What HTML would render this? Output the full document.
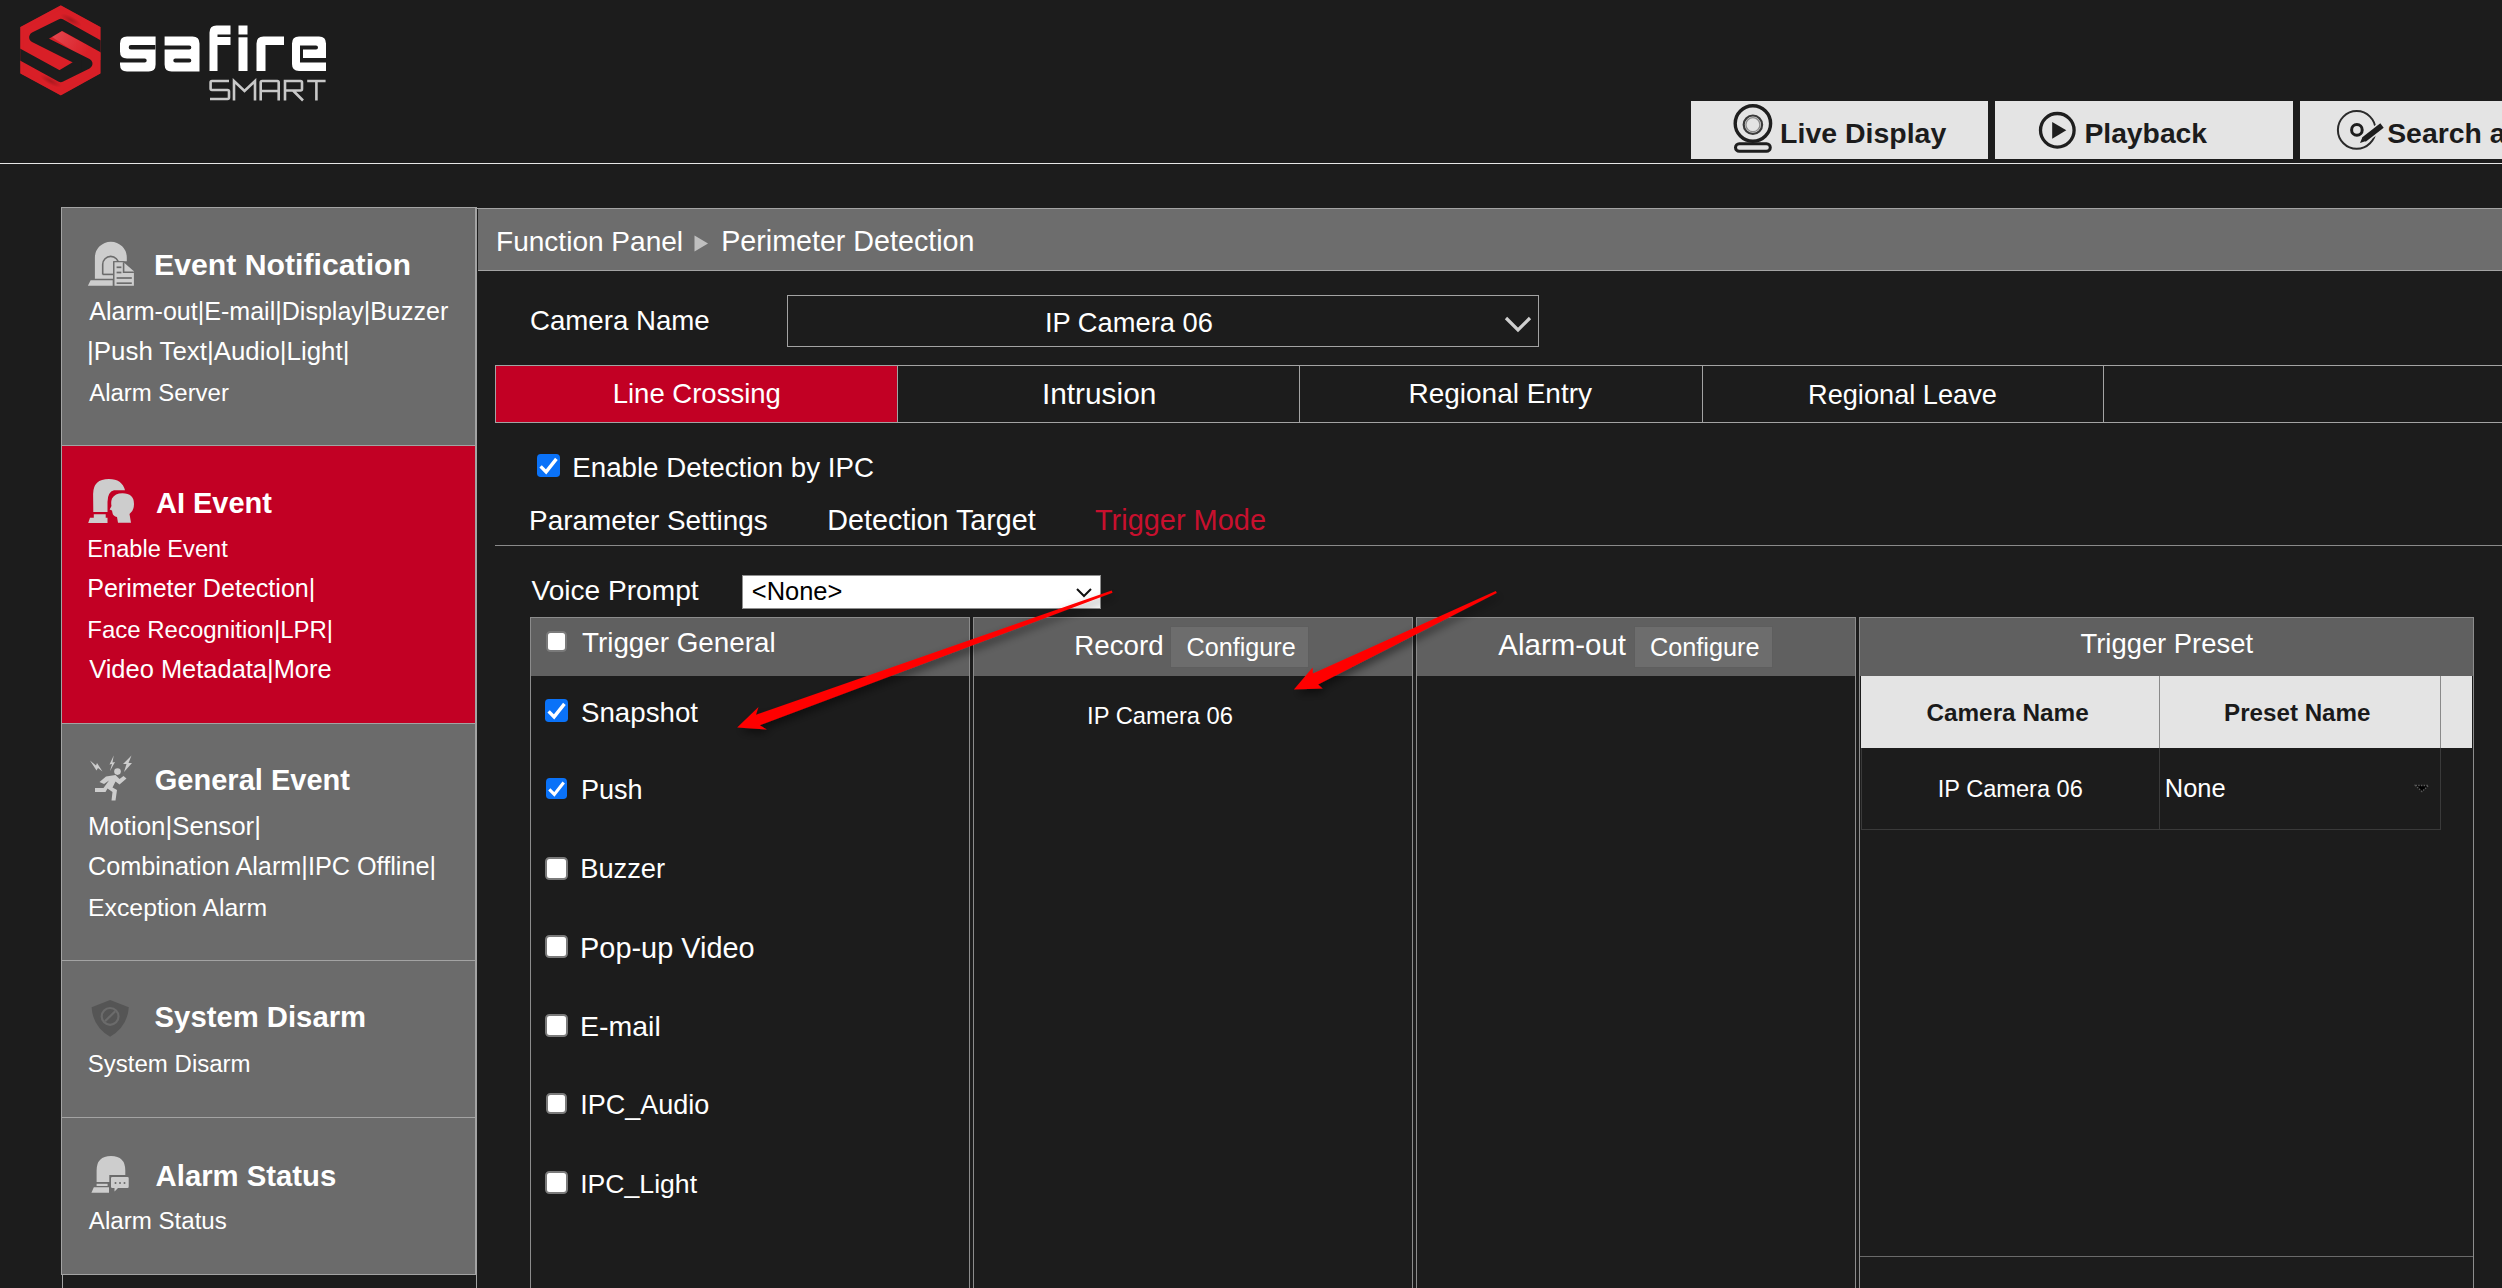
<!DOCTYPE html>
<html><head><meta charset="utf-8">
<style>
*{margin:0;padding:0;box-sizing:border-box}
html,body{width:2502px;height:1288px;overflow:hidden;background:#1c1c1c;font-family:"Liberation Sans",sans-serif;color:#fff}
.a{position:absolute}
.t{position:absolute;white-space:nowrap;line-height:1}
.b{font-weight:bold}
.box{position:absolute;border:1px solid #a3a3a3}
</style></head><body>

<!-- LOGO -->
<svg class="a" style="left:0;top:0" width="340" height="110" viewBox="0 0 340 110">
  <defs>
   <clipPath id="hexc"><polygon points="60.8,5.2 100.6,27 100.6,73.5 60.8,95.6 20.2,73.5 20.2,27"/></clipPath>
   <radialGradient id="fold"><stop offset="0" stop-color="#000" stop-opacity="0.22"/><stop offset="1" stop-color="#000" stop-opacity="0"/></radialGradient>
   <linearGradient id="hl" x1="50" y1="36" x2="85" y2="56" gradientUnits="userSpaceOnUse"><stop offset="0" stop-color="#e5474f"/><stop offset="1" stop-color="#d92028"/></linearGradient>
  </defs>
  <g clip-path="url(#hexc)">
   <polygon points="60.8,7 99.1,28 99.1,72.5 60.8,93.8 21.7,72.5 21.7,28" fill="#d91f27" stroke="#d91f27" stroke-width="4" stroke-linejoin="round"/>
   <polygon points="50.5,36 60.5,30.5 100.6,52.5 100.6,60 87,60" fill="url(#hl)"/>
   <polyline points="108,50.3 60.8,24.1 34.4,37.3 87.2,63.7 60.8,76.9 13,50.7" fill="none" stroke="#1c1c1c" stroke-width="10.5" stroke-linejoin="round"/>
   <polygon points="46,40.5 64,29.8 40,29.8 40,40.5" fill="#1c1c1c"/>
   <polygon points="75.6,60.5 57.6,71.2 81.6,71.2 81.6,60.5" fill="#1c1c1c"/>
   <ellipse cx="71" cy="20" rx="12" ry="3.8" transform="rotate(28 71 20)" fill="url(#fold)"/>
   <ellipse cx="50.6" cy="81" rx="12" ry="3.8" transform="rotate(28 50.6 81)" fill="url(#fold)"/>
  </g>
  <g fill="#fff">
    <!-- s -->
    <path fill-rule="evenodd" d="M127,36.5 H155.6 V64.4 Q155.6,71.4 148.6,71.4 H127 Q120,71.4 120,64.4 V62.4 H144.7 Q146.7,62.4 146.7,60.4 Q146.7,58.4 144.7,58.4 H127 Q120,58.4 120,51.4 V43.5 Q120,36.5 127,36.5 Z M130.9,45.1 Q128.7,45.1 128.7,47.35 Q128.7,49.6 130.9,49.6 H156 V45.1 Z"/>
    <!-- a -->
    <path fill-rule="evenodd" d="M164.6,36.5 H192.5 Q199.5,36.5 199.5,43.5 V71.4 H171.6 Q164.6,71.4 164.6,64.4 V49.4 H189.3 Q191.3,49.4 191.3,47.45 Q191.3,45.5 189.3,45.5 H164.6 Z M175.3,58.4 Q173.3,58.4 173.3,60.4 Q173.3,62.4 175.3,62.4 H189.3 Q191.3,62.4 191.3,60.4 Q191.3,58.4 189.3,58.4 Z"/>
    <!-- f -->
    <path d="M216.5,25.5 H230.5 V34.5 H217.5 V37 H230.5 V45 H217.5 V71 H209.5 V32.5 Q209.5,25.5 216.5,25.5 Z"/>
    <!-- i -->
    <rect x="238.5" y="25.5" width="9" height="9"/>
    <rect x="238.5" y="37.3" width="9" height="33.7"/>
    <!-- r -->
    <path d="M263.5,36.5 H284 V45 H265.5 V71 H256.5 V43.5 Q256.5,36.5 263.5,36.5 Z"/>
    <!-- e -->
    <path fill-rule="evenodd" d="M299,36.5 H319 Q326,36.5 326,43.5 V58 H303 V62.5 H326 V71 H299 Q292,71 292,64 V43.5 Q292,36.5 299,36.5 Z M300,45.5 V62.5 H303 V49.5 H316 Q318,49.5 318,47.5 Q318,45.5 316,45.5 Z"/>
  </g>
  <g fill="none" stroke="#c8c8c8" stroke-width="2.6">
    <!-- S -->
    <path d="M229,81 H212 Q210.6,81 210.6,82.5 V88.5 Q210.6,90 212,90 H227.5 Q229,90 229,91.5 V97.5 Q229,99 227.5,99 H210"/>
    <!-- M -->
    <path d="M234,100.5 V81 L244.5,91 L255,81 V100.5"/>
    <!-- A -->
    <path d="M260.7,100.5 V82.5 Q260.7,81 262.2,81 H277.3 Q278.7,81 278.7,82.5 V100.5 M260.7,91 H278.7"/>
    <!-- R -->
    <path d="M285,100.5 V81 H300.5 Q302,81 302,82.5 V89 Q302,90.5 300.5,90.5 H285 M293,90.5 L303,100.5"/>
    <!-- T -->
    <path d="M307.2,81 H325.6 M316.4,81 V100.5"/>
  </g>
</svg>

<!-- header line -->
<div class="a" style="left:0;top:163px;width:2502px;height:1px;background:#e6e6e6"></div>

<!-- NAV BUTTONS -->
<div class="a" style="left:1691px;top:101px;width:297px;height:58px;background:#e4e4e4"></div>
<div class="a" style="left:1995px;top:101px;width:298px;height:58px;background:#e4e4e4"></div>
<div class="a" style="left:2300px;top:101px;width:202px;height:58px;background:#e4e4e4"></div>

<svg class="a" style="left:1725px;top:100px" width="56" height="60" viewBox="1725 100 56 60">
 <circle cx="1752.9" cy="123.5" r="17.7" fill="none" stroke="#1e1e1e" stroke-width="3.4"/>
 <circle cx="1752.9" cy="124.7" r="9.2" fill="none" stroke="#3a3a3a" stroke-width="2.2"/>
 <circle cx="1752.9" cy="124.7" r="7" fill="none" stroke="#8c8c8c" stroke-width="1.3"/>
 <rect x="1735.5" y="143.7" width="34.8" height="7.6" rx="3.8" fill="none" stroke="#1e1e1e" stroke-width="3"/>
</svg>
<div class="t b" style="left:1780.1px;top:118.5px;font-size:28.47px;color:#1c1c1c">Live Display</div>
<svg class="a" style="left:2030px;top:100px" width="56" height="60" viewBox="2030 100 56 60">
 <circle cx="2057.3" cy="130.3" r="16.8" fill="none" stroke="#1e1e1e" stroke-width="3.3"/>
 <polygon points="2052.2,121.9 2052.2,138.7 2066.3,130.3" fill="#1e1e1e"/>
</svg>
<div class="t b" style="left:2084.4px;top:118.6px;font-size:28.30px;color:#1c1c1c">Playback</div>
<svg class="a" style="left:2330px;top:100px" width="60" height="60" viewBox="2330 100 60 60">
 <circle cx="2356.7" cy="129.9" r="18.8" fill="none" stroke="#2a2a2a" stroke-width="2"/>
 <circle cx="2356.9" cy="129.9" r="5.3" fill="none" stroke="#1e1e1e" stroke-width="3"/>
 <line x1="2363" y1="140" x2="2381.5" y2="126" stroke="#e4e4e4" stroke-width="9"/>
 <line x1="2364" y1="139.5" x2="2382" y2="125.5" stroke="#1e1e1e" stroke-width="5.5"/>
 <polygon points="2360,143 2362.5,137 2366,141" fill="#1e1e1e"/>
</svg>
<div class="t b" style="left:2387.2px;top:118.8px;font-size:28.4px;color:#1c1c1c">Search and</div>
<!-- SIDEBAR -->
<div class="a" style="left:61px;top:207px;width:416px;height:1068px;background:#6b6b6b;border:1px solid #a3a3a3;border-right-width:2px"></div>
<div class="a" style="left:62px;top:445px;width:413px;height:278px;background:#c20024"></div>

<div class="a" style="left:62px;top:445px;width:413px;height:1px;background:#a3a3a3"></div>
<div class="a" style="left:62px;top:723px;width:413px;height:1px;background:#a3a3a3"></div>
<div class="a" style="left:62px;top:960px;width:413px;height:1px;background:#a3a3a3"></div>
<div class="a" style="left:62px;top:1117px;width:413px;height:1px;background:#a3a3a3"></div>
<div class="t b" style="left:154.0px;top:249.9px;font-size:30.24px">Event Notification</div>
<div class="t" style="left:89.2px;top:298.8px;font-size:25.06px">Alarm-out|E-mail|Display|Buzzer</div>
<div class="t" style="left:87.1px;top:339.1px;font-size:25.88px">|Push Text|Audio|Light|</div>
<div class="t" style="left:89.2px;top:380.7px;font-size:23.94px">Alarm Server</div>
<div class="t b" style="left:156.0px;top:488.7px;font-size:28.99px">AI Event</div>
<div class="t" style="left:87.3px;top:538.2px;font-size:23.61px">Enable Event</div>
<div class="t" style="left:87.2px;top:576.4px;font-size:25.09px">Perimeter Detection|</div>
<div class="t" style="left:87.3px;top:618.3px;font-size:23.99px">Face Recognition|LPR|</div>
<div class="t" style="left:89.2px;top:657.1px;font-size:25.46px">Video Metadata|More</div>
<div class="t b" style="left:154.8px;top:766.1px;font-size:29.02px">General Event</div>
<div class="t" style="left:87.9px;top:814.4px;font-size:25.86px">Motion|Sensor|</div>
<div class="t" style="left:88.0px;top:854.0px;font-size:25.25px">Combination Alarm|IPC Offline|</div>
<div class="t" style="left:88.0px;top:895.7px;font-size:24.80px">Exception Alarm</div>
<div class="t b" style="left:154.6px;top:1003.4px;font-size:29.27px">System Disarm</div>
<div class="t" style="left:87.8px;top:1052.3px;font-size:24.02px">System Disarm</div>
<div class="t b" style="left:155.6px;top:1160.7px;font-size:29.31px">Alarm Status</div>
<div class="t" style="left:88.8px;top:1209.0px;font-size:24.12px">Alarm Status</div>


<svg class="a" style="left:84px;top:236px" width="56" height="56" viewBox="0 0 56 56">
 <path d="M10.9,42.8 V21.6 A15.95,15.95 0 0 1 42.8,21.6 V25.2 H29.1 V42.8 Z" fill="#cdcdcd"/>
 <path d="M18.7,38.6 V28.4 A8,8 0 0 1 34.7,28.4" fill="none" stroke="#6b6b6b" stroke-width="1.6"/>
 <line x1="18.7" y1="38.4" x2="29.5" y2="38.4" stroke="#6b6b6b" stroke-width="1.6"/>
 <polygon points="3.9,49.8 6.6,44.3 28.7,44.3 28.7,49.8" fill="#cdcdcd"/>
 <polygon points="29.3,25.3 40,25.3 50.8,34.5 50.8,50.6 29.3,50.6" fill="#6b6b6b"/>
 <polygon points="30.5,26.3 39.6,26.3 49.9,35.2 49.9,49.8 30.5,49.8" fill="#cdcdcd"/>
 <polyline points="39.6,26.3 39.6,36.3 49.9,36.3" fill="none" stroke="#6b6b6b" stroke-width="1.6"/>
 <g stroke="#6b6b6b" stroke-width="1.7"><line x1="32.6" y1="31.3" x2="37.4" y2="31.3"/><line x1="32.6" y1="36.5" x2="37.4" y2="36.5"/><line x1="32.6" y1="42" x2="47.8" y2="42"/><line x1="32.6" y1="47.2" x2="47.8" y2="47.2"/></g>
</svg>
<svg class="a" style="left:84px;top:472px" width="56" height="56" viewBox="0 0 56 56">
 <path d="M9.3,40 L9.1,22 Q9.1,7 25,7 Q38,7 41,18.3 L30,18.3 Q23.5,20 23.5,30 L23.5,40 Z" fill="#cdcdcd"/>
 <polygon points="4.2,50.9 6,45.7 9.8,45.7 9.8,42.2 21.7,42.2 21.7,45.7 23.5,45.7 23.5,50.9" fill="#cdcdcd"/>
 <path d="M34,50.7 L33,45 Q29,44 28.5,41 L28,38.5 L25.7,37.5 L27.5,34 Q26.7,30 28,26.5 Q31,21.3 38.5,21.3 Q50,21.5 50,32 Q50,39 45.5,42 L47,50.7 Z" fill="#cdcdcd"/>
</svg>
<svg class="a" style="left:84px;top:750px" width="56" height="56" viewBox="0 0 56 56">
 <g fill="#cdcdcd">
 <circle cx="33.5" cy="21.6" r="3.3"/>
 <path d="M22,26.5 L31.5,25 L35.5,29 L39.5,26 L42.5,28.5 L35.5,34.5 L31.5,31.5 L28.5,37.5 L33,40 L31.5,50.5 L27.5,50.5 L28.5,42 L23.5,38.5 L21.5,42 L11,42 L11,38 L19.5,38 L25,30.5 L20,34 L15.5,32 Z"/>
 <path d="M6,10.5 L12,15.5 L13,13 L18.5,21.5 L14,18 L12.5,20.5 Z"/>
 <path d="M29.7,5.5 L25.5,14.5 L28,14 L26,21 L31,12 L28.5,12.5 Z"/>
 <path d="M47.5,5.5 L39,14 L42.5,14 L40,22 L48,13 L44.5,13 Z"/>
 </g>
</svg>
<svg class="a" style="left:84px;top:990px" width="56" height="56" viewBox="0 0 56 56">
 <path d="M26.1,10 L44.8,17.3 Q43.5,36.5 26.1,46.8 Q8.7,36.5 7.6,17.3 Z" fill="#555"/>
 <circle cx="26.1" cy="26.4" r="8.4" fill="none" stroke="#6b6b6b" stroke-width="2.2"/>
 <line x1="21" y1="31.3" x2="31.2" y2="21.3" stroke="#6b6b6b" stroke-width="2.2"/>
</svg>
<svg class="a" style="left:84px;top:1146px" width="56" height="56" viewBox="0 0 56 56">
 <path d="M12.6,36.1 V24.5 Q12.6,10 27,10 Q41.3,10 41.3,24.5 V29.1 H25.3 V36.1 Z" fill="#cdcdcd"/>
 <rect x="12.6" y="37.8" width="11" height="2.2" fill="#cdcdcd"/>
 <polygon points="7.4,46.7 9.8,41.3 25,41.3 25,46.7" fill="#cdcdcd"/>
 <path d="M28.3,30.9 H43.5 Q44.7,30.9 44.7,32 V40.8 Q44.7,42 43.5,42 H34 L30.5,45.5 L30.5,42 H28.3 Q27,42 27,40.8 V32 Q27,30.9 28.3,30.9 Z" fill="#cdcdcd"/>
 <g fill="#6b6b6b"><circle cx="31.5" cy="37" r="1"/><circle cx="36" cy="37" r="1"/><circle cx="40.5" cy="37" r="1"/></g>
</svg>

<div class="a" style="left:62px;top:1275px;width:415px;height:30px;border-left:1px solid #a3a3a3;border-right:1px solid #a3a3a3"></div>
<!-- MAIN PANEL -->
<div class="a" style="left:476px;top:208px;width:2026px;height:1px;background:#a3a3a3"></div>
<div class="a" style="left:478px;top:209px;width:2024px;height:61px;background:#6d6d6d"></div>
<div class="a" style="left:478px;top:270px;width:2024px;height:1px;background:#a3a3a3"></div>
<div class="t" style="left:496.0px;top:227.6px;font-size:28.05px">Function Panel</div>
<svg class="a" style="left:690px;top:230px" width="24" height="26"><polygon points="4.5,5.5 18,13.5 4.5,21.5" fill="#bfbfbf"/></svg>
<div class="t" style="left:721.2px;top:227.0px;font-size:28.67px">Perimeter Detection</div>
<div class="t" style="left:530.0px;top:307.1px;font-size:27.65px">Camera Name</div>
<div class="a" style="left:787px;top:295px;width:752px;height:52px;border:1px solid #a3a3a3"></div>
<div class="t" style="left:1045.0px;top:309.0px;font-size:27.29px">IP Camera 06</div>
<svg class="a" style="left:1500px;top:312px" width="36" height="24"><polyline points="6,6 18,18 30,6" fill="none" stroke="#cfcfcf" stroke-width="3.2"/></svg>
<div class="a" style="left:495px;top:365px;width:2007px;height:58px;border-top:1px solid #a3a3a3;border-bottom:1px solid #a3a3a3;border-left:1px solid #a3a3a3"></div>
<div class="a" style="left:496px;top:366px;width:401px;height:56px;background:#c20024"></div>
<div class="a" style="left:897px;top:366px;width:1px;height:56px;background:#a3a3a3"></div>
<div class="a" style="left:1299px;top:366px;width:1px;height:56px;background:#a3a3a3"></div>
<div class="a" style="left:1702px;top:366px;width:1px;height:56px;background:#a3a3a3"></div>
<div class="a" style="left:2103px;top:366px;width:1px;height:56px;background:#a3a3a3"></div>
<div class="t" style="left:612.7px;top:380.4px;font-size:27.50px">Line Crossing</div>
<div class="t" style="left:1041.9px;top:378.7px;font-size:29.85px">Intrusion</div>
<div class="t" style="left:1408.5px;top:380.3px;font-size:27.97px">Regional Entry</div>
<div class="t" style="left:1808.0px;top:381.0px;font-size:27.19px">Regional Leave</div>
<svg class="a" style="left:537px;top:454px" width="23" height="23"><rect x="0" y="0" width="23" height="23" rx="3.8" fill="#0a72f8"/><polyline points="3.60,12.40 9.10,17.90 19.40,4.90" fill="none" stroke="#fff" stroke-width="3.40"/></svg>
<div class="t" style="left:572.3px;top:454.0px;font-size:27.70px">Enable Detection by IPC</div>
<div class="t" style="left:529.1px;top:506.6px;font-size:27.88px">Parameter Settings</div>
<div class="t" style="left:827.3px;top:505.9px;font-size:28.70px">Detection Target</div>
<div class="t" style="left:1095.0px;top:505.7px;font-size:28.94px;color:#c8102e">Trigger Mode</div>
<div class="a" style="left:495px;top:545px;width:2007px;height:1px;background:#8a8a8a"></div>
<div class="t" style="left:531.5px;top:577.2px;font-size:28.10px">Voice Prompt</div>
<div class="a" style="left:742px;top:575px;width:359px;height:34px;background:#fff;border:1px solid #8f8f8f"></div>
<div class="t" style="left:751.8px;top:579.4px;font-size:25.46px;color:#000">&lt;None&gt;</div>
<svg class="a" style="left:1072px;top:584px" width="24" height="18"><polyline points="5,5 12,12 19,5" fill="none" stroke="#111" stroke-width="2"/></svg>
<div class="a" style="left:530px;top:617px;width:440px;height:700px;border:1px solid #8c8c8c;border-bottom:none"></div>
<div class="a" style="left:531px;top:618px;width:438px;height:58px;background:#606060"></div>
<div class="a" style="left:973px;top:617px;width:440px;height:700px;border:1px solid #8c8c8c;border-bottom:none"></div>
<div class="a" style="left:974px;top:618px;width:438px;height:58px;background:#606060"></div>
<div class="a" style="left:1416px;top:617px;width:440px;height:700px;border:1px solid #8c8c8c;border-bottom:none"></div>
<div class="a" style="left:1417px;top:618px;width:438px;height:58px;background:#606060"></div>
<div class="a" style="left:1859px;top:617px;width:615px;height:700px;border:1px solid #8c8c8c;border-bottom:none"></div>
<div class="a" style="left:1860px;top:618px;width:613px;height:58px;background:#606060"></div>
<svg class="a" style="left:546px;top:631px" width="21" height="21"><rect x="1" y="1" width="19" height="19" rx="3.5" fill="#fff" stroke="#7a7a7a" stroke-width="2"/></svg>
<div class="t" style="left:582.0px;top:629.3px;font-size:27.81px">Trigger General</div>
<svg class="a" style="left:545px;top:699px" width="23" height="23"><rect x="0" y="0" width="23" height="23" rx="3.8" fill="#0a72f8"/><polyline points="3.60,12.40 9.10,17.90 19.40,4.90" fill="none" stroke="#fff" stroke-width="3.40"/></svg>
<div class="t" style="left:581.0px;top:698.6px;font-size:27.70px">Snapshot</div>
<svg class="a" style="left:546px;top:778px" width="21" height="21"><rect x="0" y="0" width="21" height="21" rx="3.8" fill="#0a72f8"/><polyline points="3.29,11.32 8.31,16.34 17.71,4.47" fill="none" stroke="#fff" stroke-width="3.10"/></svg>
<div class="t" style="left:581.0px;top:777.3px;font-size:27.04px">Push</div>
<svg class="a" style="left:545px;top:857px" width="23" height="23"><rect x="1" y="1" width="21" height="21" rx="3.5" fill="#fff" stroke="#7a7a7a" stroke-width="2"/></svg>
<div class="t" style="left:580.2px;top:855.3px;font-size:27.30px">Buzzer</div>
<svg class="a" style="left:545px;top:935px" width="23" height="23"><rect x="1" y="1" width="21" height="21" rx="3.5" fill="#fff" stroke="#7a7a7a" stroke-width="2"/></svg>
<div class="t" style="left:580.1px;top:933.5px;font-size:28.89px">Pop-up Video</div>
<svg class="a" style="left:545px;top:1014px" width="23" height="23"><rect x="1" y="1" width="21" height="21" rx="3.5" fill="#fff" stroke="#7a7a7a" stroke-width="2"/></svg>
<div class="t" style="left:580.1px;top:1012.1px;font-size:28.47px">E-mail</div>
<svg class="a" style="left:546px;top:1093px" width="21" height="21"><rect x="1" y="1" width="19" height="19" rx="3.5" fill="#fff" stroke="#7a7a7a" stroke-width="2"/></svg>
<div class="t" style="left:580.2px;top:1091.5px;font-size:27.03px">IPC_Audio</div>
<svg class="a" style="left:545px;top:1171px" width="23" height="23"><rect x="1" y="1" width="21" height="21" rx="3.5" fill="#fff" stroke="#7a7a7a" stroke-width="2"/></svg>
<div class="t" style="left:580.2px;top:1171.0px;font-size:26.62px">IPC_Light</div>
<div class="t" style="left:1074.3px;top:631.7px;font-size:27.70px">Record</div>
<div class="a" style="left:1170px;top:626px;width:139px;height:42px;background:#6d6d6d;border:1px solid #5e5e5e"></div>
<div class="t" style="left:1186.6px;top:635.1px;font-size:25.17px">Configure</div>
<div class="t" style="left:1087.1px;top:704.9px;font-size:23.73px">IP Camera 06</div>
<div class="t" style="left:1498.3px;top:630.2px;font-size:29.48px">Alarm-out</div>
<div class="a" style="left:1634px;top:626px;width:139px;height:42px;background:#6d6d6d;border:1px solid #5e5e5e"></div>
<div class="t" style="left:1649.9px;top:635.0px;font-size:25.31px">Configure</div>
<div class="t" style="left:2080.5px;top:630.2px;font-size:27.40px">Trigger Preset</div>
<div class="a" style="left:1860px;top:676px;width:613px;height:581px;border-bottom:1px solid #6a6a6a"></div>
<div class="a" style="left:1861px;top:676px;width:611px;height:72px;background:#e4e4e4"></div>
<div class="a" style="left:2159px;top:676px;width:1px;height:72px;background:#8a8a8a"></div>
<div class="a" style="left:2440px;top:676px;width:1px;height:72px;background:#8a8a8a"></div>
<div class="t b" style="left:1926.4px;top:700.5px;font-size:24.34px;color:#1a1a1a">Camera Name</div>
<div class="t b" style="left:2224.1px;top:700.6px;font-size:24.17px;color:#1a1a1a">Preset Name</div>
<div class="a" style="left:1861px;top:748px;width:580px;height:82px;border:1px solid #3a3a3a;border-top:none"></div>
<div class="a" style="left:2159px;top:748px;width:1px;height:82px;background:#3a3a3a"></div>
<div class="t" style="left:1937.8px;top:777.5px;font-size:23.57px">IP Camera 06</div>
<div class="t" style="left:2164.8px;top:775.8px;font-size:25.47px">None</div>
<svg class="a" style="left:2410px;top:780px" width="24" height="16"><polygon points="5.5,5.5 18.5,5.5 12,11.5" fill="#000" stroke="#5a5a5a" stroke-width="1.3" stroke-dasharray="1.5,1.2"/></svg>

<svg class="a" style="left:0;top:0" width="2502" height="1288">
 <defs><filter id="sh" x="-20%" y="-20%" width="140%" height="140%"><feDropShadow dx="3" dy="4" stdDeviation="4" flood-color="#000" flood-opacity="0.5"/></filter></defs>
 <polygon filter="url(#sh)" fill="#ff0000" points="737.2,727.5 758.5,707.0 756.0,714.8 1111.7,590.5 1112.5,592.7 759.8,725.2 766.7,729.6"/>
 <polygon filter="url(#sh)" fill="#ff0000" points="1293.9,689.4 1312.6,667.6 1312.9,673.6 1495.8,590.9 1496.8,593.1 1318.1,684.4 1322.6,688.4"/>
</svg>
</body></html>
